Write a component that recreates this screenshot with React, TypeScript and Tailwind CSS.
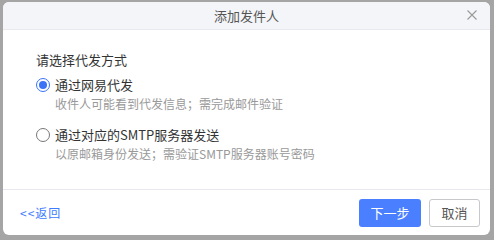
import { useState } from "react";

const options = [
  { key: "netease", label: "通过网易代发", desc: "收件人可能看到代发信息；需完成邮件验证" },
  { key: "smtp", label: "通过对应的SMTP服务器发送", desc: "以原邮箱身份发送；需验证SMTP服务器账号密码" },
];

export default function App() {
  const [mode, setMode] = useState("netease");

  return (
    <div
      className="w-[494px] h-[240px] bg-[#a5a5a5] pt-[2px] pl-[3px]"
      style={{ fontFamily: '"Noto Sans CJK SC", "Noto Sans", sans-serif' }}
    >
      <div className="w-[487px] h-[233px] bg-white rounded-[6px] overflow-hidden flex flex-col">
        {/* 标题栏 */}
        <div className="relative h-[28px] bg-[#f4f5f9] border-b border-[#e8e9ee] flex items-center justify-center">
          <span className="text-[13px] text-[#555] leading-none">添加发件人</span>
          <button className="absolute right-[12px] top-[7px] text-[#999]">
            <svg width="12" height="12" viewBox="0 0 12 12" fill="none" stroke="currentColor" strokeWidth="1.1">
              <path d="M1.5 1.5 L10.5 10.5 M10.5 1.5 L1.5 10.5" />
            </svg>
          </button>
        </div>

        {/* 内容 */}
        <div className="flex-1 pl-[33px] pt-[21px]">
          <p className="text-[13px] text-[#333] leading-[18px]">请选择代发方式</p>
          <div className="mt-[7px] flex flex-col gap-[13px]">
            {options.map((o) => (
              <div key={o.key}>
                <label className="flex items-center gap-[5px] cursor-pointer" onClick={() => setMode(o.key)}>
                  {mode === o.key ? (
                    <span className="w-[14px] h-[14px] rounded-full border-[1.5px] border-[#3b72f6] flex items-center justify-center">
                      <span className="w-[8px] h-[8px] rounded-full bg-[#3b72f6]" />
                    </span>
                  ) : (
                    <span className="w-[14px] h-[14px] rounded-full border border-[#777]" />
                  )}
                  <span className="text-[13px] text-[#333] leading-[18px]">{o.label}</span>
                </label>
                <p className="pl-[19px] mt-[1px] text-[12px] text-[#999] leading-[18px]">{o.desc}</p>
              </div>
            ))}
          </div>
        </div>

        {/* 底部 */}
        <div className="h-[46px] border-t border-[#e8e9ee] flex items-center justify-between pl-[17px] pr-[10px]">
          <a className="text-[12px] text-[#3d7bff] tracking-[1px] cursor-pointer">&lt;&lt;返回</a>
          <div className="flex gap-[8px]">
            <button className="w-[62px] h-[28px] rounded-[3px] bg-[#4a80ff] text-white text-[13px]">下一步</button>
            <button className="w-[51px] h-[28px] rounded-[3px] border border-[#c8c8cc] bg-white text-[#555] text-[13px]">
              取消
            </button>
          </div>
        </div>
      </div>
    </div>
  );
}
